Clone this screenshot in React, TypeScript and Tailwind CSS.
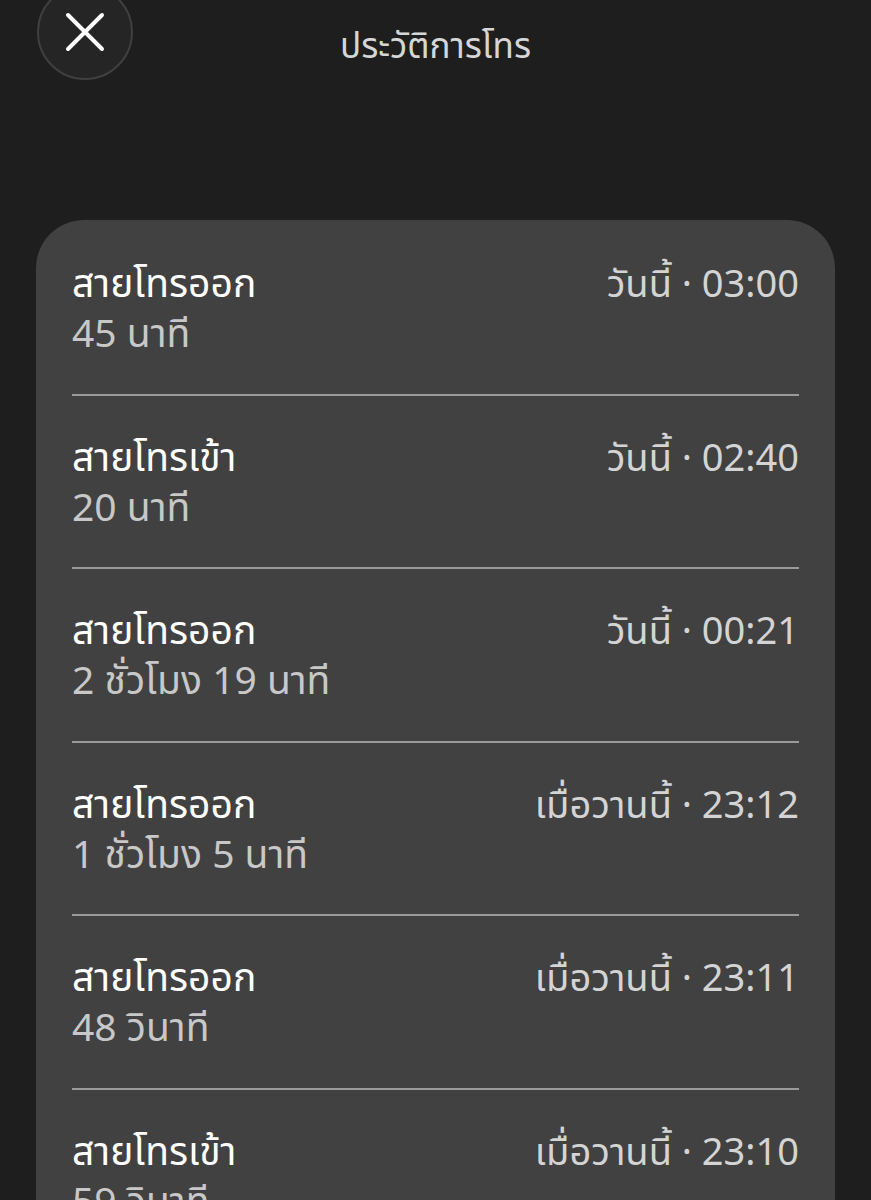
import React from "react";

const rows = [
  { title: "สายโทรออก", sub: "45 นาที", time: "วันนี้ · 03:00" },
  { title: "สายโทรเข้า", sub: "20 นาที", time: "วันนี้ · 02:40" },
  { title: "สายโทรออก", sub: "2 ชั่วโมง 19 นาที", time: "วันนี้ · 00:21" },
  { title: "สายโทรออก", sub: "1 ชั่วโมง 5 นาที", time: "เมื่อวานนี้ · 23:12" },
  { title: "สายโทรออก", sub: "48 วินาที", time: "เมื่อวานนี้ · 23:11" },
  { title: "สายโทรเข้า", sub: "59 วินาที", time: "เมื่อวานนี้ · 23:10" },
];

export default function App() {
  return (
    <div
      className="w-[871px] h-[1200px] overflow-hidden bg-[#1e1e1e] relative"
      style={{ fontFamily: '"Noto Sans Thai", "Noto Sans", "Liberation Sans", sans-serif' }}
    >
      <div className="h-[220px] relative">
        <button className="absolute left-[37px] top-[-16px] w-[96px] h-[96px] rounded-full bg-[#252525] border-2 border-[#404040] flex items-center justify-center">
          <svg width="40" height="40" viewBox="0 0 40 40">
            <path d="M3 3 L37 37 M37 3 L3 37" stroke="#ffffff" strokeWidth="4" strokeLinecap="round" />
          </svg>
        </button>
        <div className="pt-[28px] text-center text-[35px] leading-[40px] text-[#d6d6d6]">ประวัติการโทร</div>
      </div>
      <div className="mx-[36px] rounded-t-[48px] bg-[#414141] px-[36px] pb-[40px]">
        {rows.map((r, i) => (
          <div
            key={i}
            className={"h-[173.5px] " + (i > 0 ? "pt-[39px] border-t-2 border-[#9a9a9a]" : "pt-[41px]")}
          >
            <div className="flex justify-between items-center">
              <div className="text-[39px] leading-[50px] text-white">{r.title}</div>
              <div className="text-[38px] leading-[50px] text-[#d4d4d4]">{r.time}</div>
            </div>
            <div className="text-[39px] leading-[50px] text-[#c8c8c8]">{r.sub}</div>
          </div>
        ))}
      </div>
    </div>
  );
}
